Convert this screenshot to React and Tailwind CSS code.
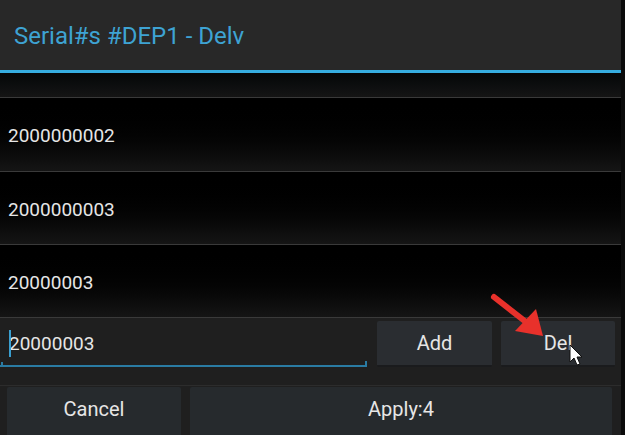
import React from "react";

const font = { fontFamily: "Roboto, 'Noto Sans', sans-serif" };

function Row({ text, h }) {
  return (
    <div className={`${h} flex items-center pl-[8px] pt-[4px] bg-gradient-to-b from-[#000000] to-[#151515] border-b border-[#3a3a3a] text-[19px] text-[#e6e6e6]`}>
      {text}
    </div>
  );
}

export default function App() {
  return (
    <div className="w-[625px] h-[435px] bg-[#0b0b0b] flex overflow-hidden relative" style={font}>
      <div className="w-[621px] h-full flex flex-col">
        <div className="h-[70px] bg-[#282828] flex items-center pl-[14px] pt-[2px] text-[24px] text-[#3ea3d3] shrink-0">
          Serial#s #DEP1 - Delv
        </div>
        <div className="h-[3px] bg-[#36ade0] shrink-0" />
        <div className="h-[25px] bg-gradient-to-b from-[#050708] to-[#151515] border-b border-[#3a3a3a] shrink-0" />
        <Row text="2000000002" h="h-[74px]" />
        <Row text="2000000003" h="h-[73px]" />
        <Row text="20000003" h="h-[73px]" />
        <div className="flex-1 bg-[#1f1f1f] flex flex-col">
          <div className="flex items-stretch h-[46px] mt-[3px]">
            <div className="w-[369px] relative flex items-center pl-[9px] text-[19px] text-[#e6e6e6]">
              <span className="w-[2px] h-[27px] bg-[#3a9fd0] absolute left-[9px] top-[9px]" />
              <span>20000003</span>
              <div className="absolute left-0 right-[2px] bottom-0 h-[2px] bg-[#2a7ba3]" />
              <div className="absolute left-[1px] bottom-0 w-[2px] h-[5px] bg-[#2a7ba3]" />
              <div className="absolute right-[2px] bottom-0 w-[2px] h-[6px] bg-[#2a7ba3]" />
            </div>
            <div className="ml-[8px] w-[115px] bg-[#2a2d31] rounded-[2px] border-b-2 border-[#1a1b1d] flex items-center justify-center text-[20px] text-[#e6e6e6]">
              Add
            </div>
            <div className="ml-[9px] w-[114px] bg-[#2a2d31] rounded-[2px] border-b-2 border-[#1a1b1d] flex items-center justify-center text-[20px] text-[#e6e6e6]">
              Del
            </div>
          </div>
          <div className="h-[1px] bg-[#2c2c2c] mt-[18px]" />
          <div className="flex flex-1 pt-[1px]">
            <div className="ml-[7px] w-[174px] bg-[#262a2d] rounded-t-[2px] flex items-center justify-center pb-[5px] text-[20px] text-[#e6e6e6]">
              Cancel
            </div>
            <div className="ml-[9px] w-[422px] bg-[#262a2d] rounded-t-[2px] flex items-center justify-center pb-[5px] text-[20px] text-[#e6e6e6]">
              Apply:4
            </div>
          </div>
        </div>
      </div>
      <svg className="absolute left-0 top-0 pointer-events-none" width="625" height="435" viewBox="0 0 625 435">
        <line x1="494" y1="297" x2="526" y2="322" stroke="#e8312b" strokeWidth="6" strokeLinecap="round" />
        <polygon points="543,336 515,331 536,309" fill="#e8312b" />
        <path d="M570 345 L570 362 L574 358 L577 365 L580 364 L577 357 L582 357 Z" fill="#ffffff" stroke="#111" strokeWidth="1" strokeLinejoin="round" />
      </svg>
    </div>
  );
}
